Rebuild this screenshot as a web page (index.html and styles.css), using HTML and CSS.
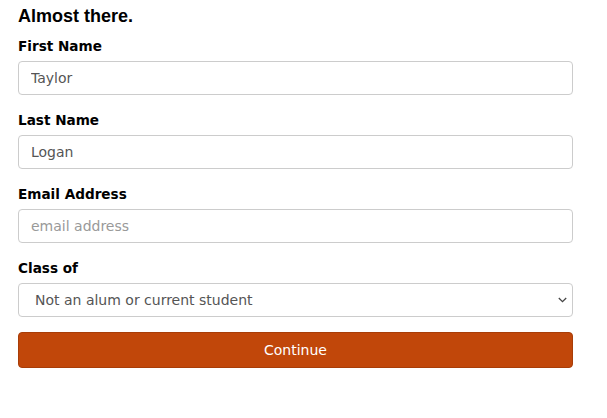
FILE: index.html
```html
<!DOCTYPE html>
<html lang="en">
<head>
<meta charset="utf-8">
<title>Almost there.</title>
<link rel="stylesheet" href="styles.css">
</head>
<body>
<form class="signup">
  <h2 class="signup-title">Almost there.</h2>
  <div class="field">
    <label class="field-label" for="first">First Name</label>
    <input class="field-input" id="first" type="text" value="Taylor">
  </div>
  <div class="field">
    <label class="field-label" for="last">Last Name</label>
    <input class="field-input" id="last" type="text" value="Logan">
  </div>
  <div class="field">
    <label class="field-label" for="email">Email Address</label>
    <input class="field-input" id="email" type="email" placeholder="email address">
  </div>
  <div class="field">
    <label class="field-label" for="class">Class of</label>
    <div class="select-wrap">
      <select class="field-input field-select" id="class">
        <option>Not an alum or current student</option>
      </select>
      <svg class="select-arrow" width="9" height="6" viewBox="0 0 9 6" aria-hidden="true">
        <path d="M0.8 1 L4.5 4.6 L8.2 1" fill="none" stroke="#444" stroke-width="1.3"/>
      </svg>
    </div>
  </div>
  <button class="continue-btn" type="button">Continue</button>
</form>
</body>
</html>
```
FILE: styles.css
```css
html, body {
  margin: 0;
  padding: 0;
  background: #ffffff;
}

.signup {
  width: 555px;
  margin: 0 0 0 18px;
  padding-top: 6px;
  font-family: "DejaVu Sans", Verdana, sans-serif;
  color: #000;
}

.signup-title {
  margin: 0 0 12px 0;
  font-family: "Liberation Sans", Arial, sans-serif;
  font-size: 18px;
  line-height: 20px;
  font-weight: bold;
}

.field {
  display: flex;
  flex-direction: column;
  margin-bottom: 17px;
}

.field-label {
  font-size: 13.6px;
  line-height: 16px;
  font-weight: bold;
  margin-bottom: 7px;
}

.field-input {
  box-sizing: border-box;
  width: 100%;
  height: 34px;
  margin: 0;
  padding: 0 12px;
  border: 1px solid #cccccc;
  border-radius: 4px;
  background: #ffffff;
  font-family: "DejaVu Sans", Verdana, sans-serif;
  font-size: 14px;
  color: #555555;
  outline: none;
}

.field-input::placeholder {
  color: #999999;
}

.select-wrap {
  position: relative;
}

.field-select {
  display: block;
  -webkit-appearance: none;
  appearance: none;
  padding-left: 16px;
  padding-right: 30px;
}

.select-arrow {
  position: absolute;
  right: 6px;
  top: 14px;
  pointer-events: none;
}

.continue-btn {
  display: block;
  box-sizing: border-box;
  width: 100%;
  height: 36px;
  margin: -2px 0 0 0;
  padding: 0;
  border: 1px solid #a83d08;
  border-radius: 4px;
  background: #c1470a;
  color: #ffffff;
  font-family: "DejaVu Sans", Verdana, sans-serif;
  font-size: 14px;
}
```
